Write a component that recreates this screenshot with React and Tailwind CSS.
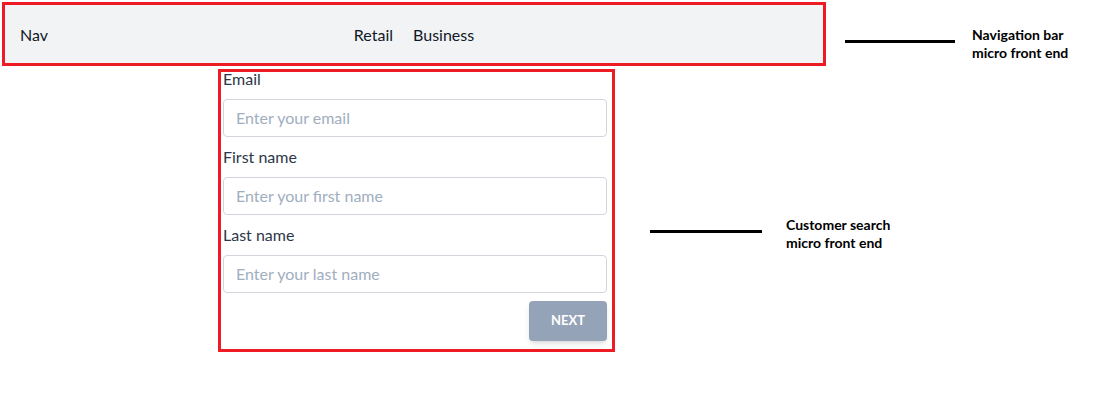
export default function App() {
  const ui = { fontFamily: "Lato, 'Open Sans', sans-serif" };
  const Field = ({ label, placeholder, first }) => (
    <>
      <label className={`block text-base leading-4 text-[#2d3748] ${first ? "-mt-px" : "mt-3"} mb-3`}>{label}</label>
      <input
        type="text"
        placeholder={placeholder}
        className="block w-full h-[38px] rounded-[4px] border border-[#d2d6dc] bg-white px-3 pb-px text-base text-[#2d3748] placeholder:text-[#a0aec0] outline-none"
        style={ui}
      />
    </>
  );
  return (
    <div className="w-[1112px] h-[419px] bg-white overflow-hidden" style={ui}>
      <div className="flex items-start pt-[2px] pl-[2px]">
        <div className="w-[824px] h-[64px] border-[3px] border-[#ed1c24] bg-[#f2f3f5] flex items-center px-[15px] pt-[2px] text-base text-[#111827]">
          <div className="flex-1">Nav</div>
          <div className="flex gap-5">
            <span>Retail</span>
            <span>Business</span>
          </div>
          <div className="flex-1" />
        </div>
        <div className="ml-[19px] mt-[38px] w-[110px] h-[3px] bg-black" />
        <div className="ml-[17px] mt-[24px] text-[14px] leading-[18px] font-bold text-black">
          Navigation bar<br />micro front end
        </div>
      </div>
      <div className="flex items-start">
        <div className="ml-[218px] mt-[3px] w-[397px] h-[283px] border-[3px] border-[#ed1c24] pl-[2px] pr-[5px] pb-2">
          <Field label="Email" placeholder="Enter your email" first />
          <Field label="First name" placeholder="Enter your first name" />
          <Field label="Last name" placeholder="Enter your last name" />
          <div className="flex justify-end mt-2">
            <button className="w-[78px] h-[40px] rounded-[4px] bg-[#94a3b8] text-white text-[13px] font-bold uppercase shadow-md">
              Next
            </button>
          </div>
        </div>
        <div className="ml-[35px] mt-[164px] w-[112px] h-[3px] bg-black" />
        <div className="ml-[24px] mt-[150px] text-[14px] leading-[18px] font-bold text-black">
          Customer search<br />micro front end
        </div>
      </div>
    </div>
  );
}
